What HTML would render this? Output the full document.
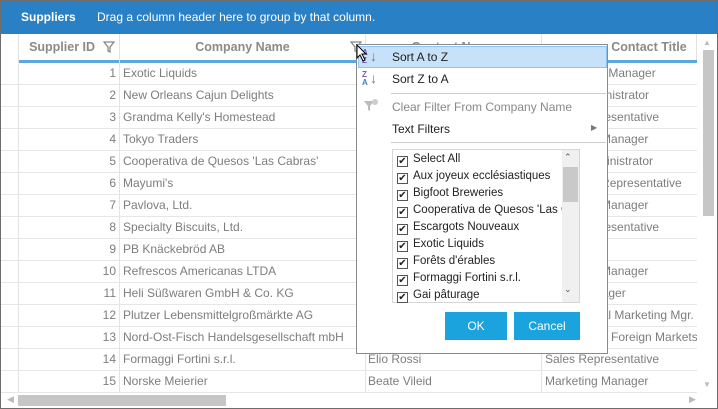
<!DOCTYPE html><html><head><style>
*{margin:0;padding:0;box-sizing:border-box}
body{width:718px;height:409px;overflow:hidden;background:#fff;font-family:"Liberation Sans","DejaVu Sans",sans-serif;position:relative}
.frame{position:absolute;left:0;top:0;width:718px;height:409px;border:1px solid #6d6d6d}
.top{position:absolute;left:1px;top:1px;width:716px;height:33px;background:#2a80c4;color:#fff;font-size:12px}
.top b{position:absolute;left:20px;top:9px;font-size:12px}
.top span{position:absolute;left:96px;top:9px}
.hdr{position:absolute;top:34px;height:26px;font-size:12.5px;font-weight:bold;color:#8a8a8a;text-align:center;line-height:26px;border-right:1px solid #e3e3e3}
.bl{position:absolute;left:18px;top:60px;width:679px;height:3px;background:#5ba8de}
.row{position:absolute;left:1px;width:696px;height:22px;border-bottom:1px solid #e6e6e6;font-size:12px;color:#7d7d7d;line-height:21px}
.row div{position:absolute;top:0;height:21px;white-space:nowrap;overflow:hidden}
.vl{position:absolute;top:34px;height:359px;width:1px;background:#e3e3e3}
.menu{position:absolute;left:356px;top:44px;width:252px;height:310px;background:#fff;border:1px solid #8a8a8a;font-size:12px;color:#222}
.mi{position:absolute;left:35px}
.sep{position:absolute;left:34px;width:215px;height:1px;background:#ccc}
.list{position:absolute;left:35px;top:104px;width:188px;height:154px;border:1px solid #d6d6d6;font-size:11.5px}
.it{position:absolute;left:4px;height:17px;line-height:16px;white-space:nowrap}
.cb{display:inline-block;width:11px;height:11px;border:1px solid #555;vertical-align:-2px;margin-right:5px;position:relative;font-size:10px;line-height:9px;text-align:center;font-weight:bold}
.btn{position:absolute;top:267px;height:28px;background:#1aa3dd;color:#fff;text-align:center;line-height:28px;font-size:12px}
</style></head><body>
<div class="frame"></div>
<div class="top"><b>Suppliers</b><span>Drag a column header here to group by that column.</span></div>
<div class="hdr" style="left:1px;width:18px"></div>
<div class="hdr" style="left:19px;width:101px">Supplier ID&nbsp;&nbsp;&nbsp;&nbsp;</div>
<svg style="position:absolute;left:103px;top:41px" width="12" height="12"><path d="M1 1H11L7 6V11L5 10V6Z" fill="none" stroke="#888" stroke-width="1.3"/></svg>
<div class="hdr" style="left:120px;width:246px">Company Name</div>
<svg style="position:absolute;left:350px;top:41px" width="12" height="12"><path d="M1 1H11L7 6V11L5 10V6Z" fill="none" stroke="#888" stroke-width="1.3"/></svg>
<div class="hdr" style="left:366px;width:176px">Contact Name</div>
<div class="hdr" style="left:542px;width:155px;padding-left:60px">Contact Title</div>
<div class="bl"></div>
<div class="vl" style="left:18px"></div><div class="vl" style="left:119px"></div><div class="vl" style="left:365px"></div><div class="vl" style="left:541px"></div>
<div id="rows"></div>
<script>
var d=[["Exotic Liquids","","Purchasing Manager"],["New Orleans Cajun Delights","","Order Administrator"],["Grandma Kelly's Homestead","","Sales Representative"],["Tokyo Traders","","Marketing Manager"],["Cooperativa de Quesos 'Las Cabras'","","Export Administrator"],["Mayumi's","","Marketing Representative"],["Pavlova, Ltd.","","Marketing Manager"],["Specialty Biscuits, Ltd.","","Sales Representative"],["PB Knäckebröd AB","",""],["Refrescos Americanas LTDA","","Marketing Manager"],["Heli Süßwaren GmbH & Co. KG","","Sales Manager"],["Plutzer Lebensmittelgroßmärkte AG","","International Marketing Mgr."],["Nord-Ost-Fisch Handelsgesellschaft mbH","","Coordinator Foreign Markets"],["Formaggi Fortini s.r.l.","Elio Rossi","Sales Representative"],["Norske Meierier","Beate Vileid","Marketing Manager"]];
var h="";d.forEach(function(r,i){h+='<div class="row" style="top:'+(63+i*22)+'px"><div style="left:18px;width:97px;text-align:right">'+(i+1)+'</div><div style="left:122px;width:240px">'+r[0]+'</div><div style="left:367px;width:172px">'+r[1]+'</div><div style="left:544px;width:152px">'+r[2]+'</div></div>'});document.getElementById("rows").innerHTML=h;
</script>
<div style="position:absolute;left:697px;top:34px;width:20px;height:359px;background:#fff"></div>
<div style="position:absolute;left:703px;top:38px;font-size:8px;color:#bbb">▲</div>
<div style="position:absolute;left:703px;top:50px;width:11px;height:166px;background:#c6c6c6"></div>
<div style="position:absolute;left:703px;top:380px;font-size:8px;color:#bbb">▼</div>
<div style="position:absolute;left:1px;top:393px;width:716px;height:15px;background:#fff"></div>
<div style="position:absolute;left:7px;top:394px;font-size:9px;color:#bbb">◀</div>
<div style="position:absolute;left:18px;top:395px;width:208px;height:11px;background:#c6c6c6"></div>
<div style="position:absolute;left:689px;top:394px;font-size:9px;color:#bbb">▶</div>
<div class="menu">
<div style="position:absolute;left:1px;top:1px;width:249px;height:22px;background:#c6e1f8;border:1px solid #8cc4f2"></div>
<div style="position:absolute;left:5px;top:4px;font-size:8px;line-height:8px;color:#7e57c2;font-weight:bold">A<br>Z</div>
<div style="position:absolute;left:13px;top:3px;font-size:14px;color:#777">↓</div>
<div class="mi" style="top:5px">Sort A to Z</div>
<div style="position:absolute;left:5px;top:26px;font-size:8px;line-height:8px;color:#7e57c2;font-weight:bold">Z<br><span style="color:#3b82c4">A</span></div>
<div style="position:absolute;left:13px;top:25px;font-size:14px;color:#777">↓</div>
<div class="mi" style="top:27px">Sort Z to A</div>
<div class="sep" style="top:48px"></div>
<svg style="position:absolute;left:6px;top:54px" width="16" height="14"><path d="M1 2H11L7 7V12L5 11V7Z" fill="#bbb"/><circle cx="12" cy="3" r="3" fill="#ccc"/></svg>
<div class="mi" style="top:55px;color:#888">Clear Filter From Company Name</div>
<div class="mi" style="top:77px">Text Filters</div>
<div style="position:absolute;left:234px;top:78px;font-size:8px;color:#777">▶</div>
<div class="sep" style="top:97px"></div>
<div class="list">
<div class="it" style="top:1px"><span class="cb">✔</span>Select All</div>
<div class="it" style="top:18px"><span class="cb">✔</span>Aux joyeux ecclésiastiques</div>
<div class="it" style="top:35px"><span class="cb">✔</span>Bigfoot Breweries</div>
<div class="it" style="top:52px;width:165px;overflow:hidden"><span class="cb">✔</span>Cooperativa de Quesos 'Las Cabras'</div>
<div class="it" style="top:69px"><span class="cb">✔</span>Escargots Nouveaux</div>
<div class="it" style="top:86px"><span class="cb">✔</span>Exotic Liquids</div>
<div class="it" style="top:103px"><span class="cb">✔</span>Forêts d'érables</div>
<div class="it" style="top:120px"><span class="cb">✔</span>Formaggi Fortini s.r.l.</div>
<div class="it" style="top:137px"><span class="cb">✔</span>Gai pâturage</div>
<div style="position:absolute;left:169px;top:0;width:17px;height:152px;background:#f0f0f0"></div>
<div style="position:absolute;left:171px;top:2px;font-size:9px;color:#555">⌃</div>
<div style="position:absolute;left:170px;top:17px;width:15px;height:35px;background:#c9c9c9"></div>
<div style="position:absolute;left:171px;top:134px;font-size:9px;color:#555">⌄</div>
</div>
<div class="btn" style="left:88px;width:62px">OK</div>
<div class="btn" style="left:157px;width:66px">Cancel</div>
</div>
<svg style="position:absolute;left:356px;top:44px" width="12" height="18"><path d="M1 1V14L4 11L7 17L9 16L6 10H10Z" fill="#fff" stroke="#000" stroke-width="1"/></svg>
</body></html>
